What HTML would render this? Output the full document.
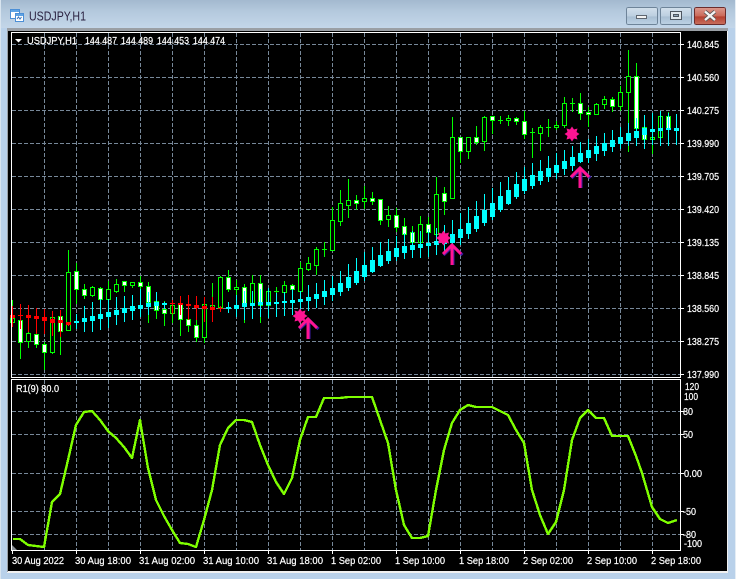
<!DOCTYPE html>
<html><head><meta charset="utf-8"><title>USDJPY,H1</title>
<style>
html,body{margin:0;padding:0;width:738px;height:579px;overflow:hidden;background:#b9d1ea}
svg{display:block}
text{font-family:"Liberation Sans",sans-serif;fill:#fff;stroke:#fff;stroke-width:.22px;font-size:10.5px}
.c{shape-rendering:crispEdges;fill:none}
</style></head><body>
<svg width="738" height="579" viewBox="0 0 738 579" xmlns="http://www.w3.org/2000/svg">
<defs>
<linearGradient id="tb" x1="0" y1="0" x2="0" y2="1"><stop offset="0" stop-color="#a3b9cf"/><stop offset=".4" stop-color="#b4c9dd"/><stop offset="1" stop-color="#c3d6e9"/></linearGradient>
<linearGradient id="bb" x1="0" y1="0" x2="0" y2="1"><stop offset="0" stop-color="#d3e0ec"/><stop offset=".5" stop-color="#bccfe0"/><stop offset=".55" stop-color="#a9bfd3"/><stop offset="1" stop-color="#bdd2e5"/></linearGradient>
<linearGradient id="rb" x1="0" y1="0" x2="0" y2="1"><stop offset="0" stop-color="#dc9a8e"/><stop offset=".5" stop-color="#cb6a5a"/><stop offset=".55" stop-color="#b54030"/><stop offset="1" stop-color="#c9705e"/></linearGradient>
<polygon id="st" fill="#ff1493" points="0,-7.5 2,-4.5 5.5,-5.5 4.5,-2 7.5,0 4.5,2 5.5,5.5 2,4.5 0,7.5 -2,4.5 -5.5,5.5 -4.5,2 -7.5,0 -4.5,-2 -5.5,-5.5 -2,-4.5"/>
<g id="ar" fill="none"><path d="M1 2V21M-8.5 11L1 2L10.5 11" stroke="#3b1aa0" stroke-width="3"/><path d="M0 2V21M-9 10L0 1L9 10" stroke="#ff1493" stroke-width="3"/></g>
</defs>
<rect width="738" height="579" fill="#b9d1ea"/>
<rect x="0" y="0" width="738" height="28" fill="url(#tb)"/>
<rect x="0" y="0" width="1" height="579" fill="#d8e4ef"/>
<rect x="735" y="0" width="1" height="579" fill="#e4edf5"/>
<rect x="736" y="0" width="2" height="579" fill="#fff"/>
<rect x="7" y="28" width="721" height="545" fill="#f0f0f0"/>
<rect x="7" y="28" width="721" height="3" fill="#9a9fa5"/>
<rect x="7" y="28" width="1" height="544" fill="#9a9fa5"/>
<rect x="8" y="31" width="719" height="540" fill="#000"/>

<!-- title icon -->
<g class="c">
<rect x="10.5" y="9.5" width="9" height="9" fill="#fff" stroke="#4c8fd6"/>
<rect x="11" y="10" width="8" height="2" fill="#5ea3e4"/>
<rect x="15.5" y="13.5" width="8" height="8" fill="#fff" stroke="#4c8fd6"/>
<rect x="16" y="14" width="7" height="2" fill="#5ea3e4"/>
</g>
<path d="M17 19l1.5-2 1.5 2 1.5-2" fill="none" stroke="#3a74b8"/>
<text x="29" y="20.5" textLength="57" lengthAdjust="spacingAndGlyphs" style="font-size:12.5px;fill:#2a2140;stroke:none">USDJPY,H1</text>

<!-- window buttons -->
<g class="c">
<rect x="626.5" y="7.5" width="31" height="17" rx="2" fill="url(#bb)" stroke="#6e8499"/>
<rect x="660.5" y="7.5" width="31" height="17" rx="2" fill="url(#bb)" stroke="#6e8499"/>
<rect x="694.5" y="7.5" width="31" height="17" rx="2" fill="url(#rb)" stroke="#6b2c2c"/>
<rect x="636.5" y="15.5" width="10" height="3" fill="#f2f2f2" stroke="#5e6670"/>
<rect x="670.5" y="11.5" width="11" height="8" fill="#dfe6ec" stroke="#4e5660"/>
<rect x="673.5" y="14.5" width="5" height="2" fill="#8fa3b6" stroke="#4e5660"/>
</g>
<path d="M705 11.5L715 20M715 11.5L705 20" stroke="#555" stroke-width="4" fill="none"/>
<path d="M705 11.5L715 20M715 11.5L705 20" stroke="#f4f4f4" stroke-width="2.4" fill="none"/>

<!-- grid -->
<path class="c" stroke="#778899" stroke-dasharray="4 2" d="M12 44.5H680M12 77.5H680M12 110.5H680M12 143.5H680M12 176.5H680M12 209.5H680M12 242.5H680M12 275.5H680M12 308.5H680M12 341.5H680M12 374.5H680M12 411.5H680M12 434.5H680M12 473.5H680M12 511.5H680M12 534.5H680"/>
<path class="c" stroke="#778899" stroke-dasharray="4 2" d="M44.5 33V377M76.5 33V377M108.5 33V377M140.5 33V377M172.5 33V377M204.5 33V377M236.5 33V377M268.5 33V377M300.5 33V377M332.5 33V377M364.5 33V377M396.5 33V377M428.5 33V377M460.5 33V377M492.5 33V377M524.5 33V377M556.5 33V377M588.5 33V377M620.5 33V377M652.5 33V377"/>
<path class="c" stroke="#778899" stroke-dasharray="4 2" d="M44.5 380V550M76.5 380V550M108.5 380V550M140.5 380V550M172.5 380V550M204.5 380V550M236.5 380V550M268.5 380V550M300.5 380V550M332.5 380V550M364.5 380V550M396.5 380V550M428.5 380V550M460.5 380V550M492.5 380V550M524.5 380V550M556.5 380V550M588.5 380V550M620.5 380V550M652.5 380V550"/>

<!-- green wicks -->
<path class="c" stroke="#00ff00" d="M12.5 300V326M20.5 315V359M28.5 330V348M36.5 331V348M44.5 342V370M52.5 317V354M60.5 312V355M68.5 250V330M76.5 263V304M84.5 284V299M92.5 286V297M100.5 287V302M108.5 281V302M116.5 279V293M124.5 281V292M132.5 282V288M140.5 276V297M148.5 282V323M156.5 301V319M164.5 301V326M172.5 301V323M180.5 304V336M188.5 319V332M196.5 320V342M204.5 304V343M212.5 283V311M220.5 276V309M228.5 270V292M236.5 280V310M244.5 284V323M252.5 275V305M260.5 275V323M268.5 288V306M276.5 287V293M284.5 281V293M292.5 284V290M300.5 262V292M308.5 257V271M316.5 247V275M324.5 242V257M332.5 207V250M340.5 190V226M348.5 179V218M356.5 195V210M364.5 186V209M372.5 192V205M380.5 199V225M388.5 206V227M396.5 208V232M404.5 218V240M412.5 226V245M420.5 216V243M428.5 217V235M436.5 177V238M444.5 187V215M452.5 117V198M460.5 137V163M468.5 137V159M476.5 126V145M484.5 116V151M492.5 116V134M500.5 116V124M508.5 115V126M516.5 117V125M524.5 111V139M532.5 128V158M540.5 125V151M548.5 119V137M556.5 121V130M564.5 97V128M572.5 98V112M580.5 93V120M588.5 107V127M596.5 103V115M604.5 96V109M612.5 97V112M620.5 86V111M628.5 50V152M636.5 63V128M644.5 118V149M652.5 120V154M660.5 112V137M668.5 112V130"/>
<!-- doji bars -->
<path class="c" stroke="#00ff00" d="M498 120.5H503M530 132.5H535M546 127.5H551M570 103.5H575M322 249.5H327M274 291.5H279"/>
<!-- hollow bodies -->
<path class="c" style="fill:#000" stroke="#00ff00" d="M10.5 318.5h4v4h-4zM26.5 333.5h4v8h-4zM50.5 317.5h4v35h-4zM66.5 272.5h4v58h-4zM90.5 287.5h4v8h-4zM106.5 289.5h4v10h-4zM114.5 284.5h4v7h-4zM130.5 282.5h4v3h-4zM170.5 305.5h4v8h-4zM202.5 304.5h4v33h-4zM210.5 305.5h4v4h-4zM218.5 277.5h4v30h-4zM234.5 287.5h4v2h-4zM250.5 283.5h4v22h-4zM266.5 291.5h4v14h-4zM282.5 285.5h4v7h-4zM298.5 268.5h4v23h-4zM306.5 263.5h4v6h-4zM314.5 249.5h4v16h-4zM330.5 220.5h4v30h-4zM338.5 203.5h4v18h-4zM346.5 200.5h4v5h-4zM362.5 198.5h4v3h-4zM386.5 215.5h4v4h-4zM418.5 224.5h4v18h-4zM434.5 194.5h4v40h-4zM450.5 137.5h4v61h-4zM466.5 137.5h4v14h-4zM482.5 117.5h4v24h-4zM506.5 118.5h4v2h-4zM538.5 127.5h4v6h-4zM554.5 125.5h4v2h-4zM562.5 103.5h4v22h-4zM594.5 104.5h4v10h-4zM602.5 99.5h4v5h-4zM618.5 92.5h4v14h-4zM626.5 76.5h4v16h-4zM650.5 137.5h4v2h-4zM658.5 116.5h4v21h-4z"/>
<!-- white bodies -->
<path class="c" style="fill:#fff" stroke="#00ff00" d="M18.5 320.5h4v22h-4zM34.5 334.5h4v10h-4zM42.5 344.5h4v8h-4zM58.5 316.5h4v15h-4zM74.5 271.5h4v18h-4zM82.5 289.5h4v6h-4zM98.5 288.5h4v11h-4zM122.5 281.5h4v4h-4zM138.5 282.5h4v4h-4zM146.5 286.5h4v16h-4zM154.5 301.5h4v9h-4zM162.5 309.5h4v4h-4zM178.5 304.5h4v15h-4zM186.5 319.5h4v6h-4zM194.5 325.5h4v12h-4zM226.5 277.5h4v12h-4zM242.5 287.5h4v18h-4zM258.5 283.5h4v22h-4zM290.5 285.5h4v4h-4zM354.5 200.5h4v3h-4zM370.5 198.5h4v3h-4zM378.5 199.5h4v21h-4zM394.5 215.5h4v12h-4zM402.5 226.5h4v8h-4zM410.5 232.5h4v10h-4zM426.5 224.5h4v8h-4zM442.5 193.5h4v8h-4zM458.5 137.5h4v14h-4zM474.5 137.5h4v5h-4zM490.5 116.5h4v4h-4zM514.5 118.5h4v3h-4zM522.5 121.5h4v13h-4zM578.5 103.5h4v10h-4zM586.5 112.5h4v2h-4zM610.5 99.5h4v7h-4zM634.5 76.5h4v52h-4zM642.5 127.5h4v12h-4zM666.5 116.5h4v13h-4z"/>

<!-- red -->
<path class="c" stroke="#ff0000" d="M12.5 306V327M20.5 304V329M28.5 305V332M36.5 308V334M44.5 309V334M52.5 311V336M60.5 310V337M68.5 322V326M172.5 300V314M180.5 296V315M188.5 295V320M196.5 296V320M204.5 297V322M212.5 297V322M220.5 306V312"/>
<g class="c" shape-rendering="crispEdges" style="fill:#ff0000"><rect x="10" y="315" width="5" height="3"/><rect x="18" y="315" width="5" height="1"/><rect x="26" y="315" width="5" height="3"/><rect x="34" y="316" width="5" height="3"/><rect x="42" y="317" width="5" height="4"/><rect x="50" y="319" width="5" height="4"/><rect x="58" y="320" width="5" height="3"/><rect x="66" y="322" width="5" height="3"/><rect x="170" y="303" width="5" height="1"/><rect x="178" y="303" width="5" height="2"/><rect x="186" y="304" width="5" height="2"/><rect x="194" y="305" width="5" height="3"/><rect x="202" y="306" width="5" height="3"/><rect x="210" y="307" width="5" height="3"/><rect x="218" y="308" width="5" height="1"/></g>

<!-- cyan wicks -->
<path class="c" stroke="#00ffff" d="M76.5 314V329M84.5 306V332M92.5 302V332M100.5 299V330M108.5 299V328M116.5 297V325M124.5 296V322M132.5 295V320M140.5 289V317M148.5 292V315M156.5 292V310M164.5 302V309M228.5 302V313M236.5 295V317M244.5 291V320M252.5 291V319M260.5 289V317M268.5 288V318M276.5 293V317M284.5 292V316M292.5 289V315M300.5 291V313M308.5 285V311M316.5 283V308M324.5 280V305M332.5 276V301M340.5 271V296M348.5 264V291M356.5 258V285M364.5 252V281M372.5 247V273M380.5 242V267M388.5 239V264M396.5 236V261M404.5 233V259M412.5 231V258M420.5 231V258M428.5 229V257M436.5 228V255M444.5 225V252M452.5 220V248M460.5 213V245M468.5 207V239M476.5 201V232M484.5 194V226M492.5 188V220M500.5 182V212M508.5 177V205M516.5 172V199M524.5 167V194M532.5 163V189M540.5 160V185M548.5 156V182M556.5 153V179M564.5 150V175M572.5 146V171M580.5 142V163M588.5 139V163M596.5 136V161M604.5 133V156M612.5 130V152M620.5 127V149M628.5 123V146M636.5 118V146M644.5 115V149M652.5 113V145M660.5 111V146M668.5 113V146M676.5 114V145"/>
<!-- cyan bodies -->
<path class="c" style="fill:#00ffff" d="M74 321h5v2h-5zM82 318h5v4h-5zM90 316h5v5h-5zM98 314h5v5h-5zM106 312h5v5h-5zM114 310h5v5h-5zM122 308h5v5h-5zM130 306h5v5h-5zM138 305h5v4h-5zM146 303h5v4h-5zM154 302h5v4h-5zM162 303h5v2h-5zM226 307h5v2h-5zM234 305h5v4h-5zM242 303h5v4h-5zM250 303h5v3h-5zM258 302h5v3h-5zM266 302h5v3h-5zM274 302h5v2h-5zM282 301h5v2h-5zM290 300h5v3h-5zM298 299h5v3h-5zM306 297h5v4h-5zM314 294h5v5h-5zM322 291h5v6h-5zM330 288h5v7h-5zM338 283h5v9h-5zM346 277h5v11h-5zM354 271h5v12h-5zM362 265h5v12h-5zM370 260h5v12h-5zM378 255h5v11h-5zM386 251h5v10h-5zM394 248h5v9h-5zM402 246h5v7h-5zM410 245h5v5h-5zM418 244h5v4h-5zM426 243h5v3h-5zM434 241h5v4h-5zM442 240h5v4h-5zM450 234h5v9h-5zM458 229h5v9h-5zM466 223h5v11h-5zM474 216h5v13h-5zM482 210h5v13h-5zM490 203h5v14h-5zM498 196h5v14h-5zM506 190h5v14h-5zM514 184h5v13h-5zM522 179h5v12h-5zM530 175h5v11h-5zM538 171h5v10h-5zM546 168h5v9h-5zM554 165h5v8h-5zM562 161h5v8h-5zM570 157h5v9h-5zM578 153h5v9h-5zM586 150h5v8h-5zM594 146h5v8h-5zM602 143h5v8h-5zM610 140h5v7h-5zM618 137h5v7h-5zM626 133h5v8h-5zM634 131h5v7h-5zM642 128h5v7h-5zM650 129h5v3h-5zM658 128h5v3h-5zM666 128h5v2h-5zM674 128h5v3h-5z"/>

<!-- stars and arrows -->
<use href="#st" x="300" y="316"/>
<use href="#st" x="443.5" y="238"/>
<use href="#st" x="572" y="134"/>
<use href="#ar" x="308" y="318"/>
<use href="#ar" x="452" y="244"/>
<use href="#ar" x="580" y="167"/>

<!-- indicator line -->
<path fill="none" stroke="#7fff00" stroke-width="2.4" stroke-linejoin="round" shape-rendering="crispEdges" d="M13 539L20 539L28 545L36 546L44 547L52 502L60 494L68 460L76 425L84 412L92 411L100 420L108 431L116 438L124 447L132 458L140 420L148 468L156 500L164 516L172 530L180 543L188 544L196 547L204 520L212 490L220 445L228 428L236 420L244 420L252 422L260 445L268 465L276 482L284 494L292 478L300 440L308 417L316 417L324 398L332 398L340 398L348 397L356 397L364 397L372 397L380 420L388 443L396 490L404 525L412 538L420 538L428 536L436 490L444 450L452 423L460 410L468 405L476 407L484 407L492 407L500 411L508 415L516 430L524 443L532 490L540 515L548 534L556 522L564 490L572 440L580 418L588 410L596 418L604 418L612 436L620 436L628 436L636 456L642 473L652 507L660 519L668 523L677 520"/>

<!-- scroll marker -->
<polygon points="12,545 17,550 12,550" fill="#8a8f96"/>

<!-- frames and ticks -->
<path class="c" stroke="#fff" d="M11.5 32.5H680.5V377.5H11.5ZM11.5 379.5H680.5V550.5H11.5Z"/>
<path class="c" stroke="#fff" d="M12.5 551V554M76.5 551V554M140.5 551V554M204.5 551V554M268.5 551V554M332.5 551V554M396.5 551V554M460.5 551V554M524.5 551V554M588.5 551V554M652.5 551V554M681 44.5H684M681 77.5H684M681 110.5H684M681 143.5H684M681 176.5H684M681 209.5H684M681 242.5H684M681 275.5H684M681 308.5H684M681 341.5H684M681 374.5H684M681 411.5H684M681 434.5H684M681 473.5H684M681 511.5H684M681 534.5H684"/>

<!-- header -->
<polygon points="15,39 22,39 18.5,42.5" fill="#fff"/>
<text x="27" y="44" textLength="50" lengthAdjust="spacingAndGlyphs">USDJPY,H1</text>
<text x="85" y="44" textLength="32" lengthAdjust="spacingAndGlyphs">144.487</text>
<text x="121" y="44" textLength="32" lengthAdjust="spacingAndGlyphs">144.489</text>
<text x="157" y="44" textLength="32" lengthAdjust="spacingAndGlyphs">144.453</text>
<text x="193" y="44" textLength="32" lengthAdjust="spacingAndGlyphs">144.474</text>
<text x="16" y="392" textLength="43" lengthAdjust="spacingAndGlyphs">R1(9) 80.0</text>

<!-- price labels -->
<text x="687" y="48" textLength="32" lengthAdjust="spacingAndGlyphs">140.845</text>
<text x="687" y="81" textLength="32" lengthAdjust="spacingAndGlyphs">140.560</text>
<text x="687" y="114" textLength="32" lengthAdjust="spacingAndGlyphs">140.275</text>
<text x="687" y="147" textLength="32" lengthAdjust="spacingAndGlyphs">139.990</text>
<text x="687" y="180" textLength="32" lengthAdjust="spacingAndGlyphs">139.705</text>
<text x="687" y="213" textLength="32" lengthAdjust="spacingAndGlyphs">139.420</text>
<text x="687" y="246" textLength="32" lengthAdjust="spacingAndGlyphs">139.135</text>
<text x="687" y="279" textLength="32" lengthAdjust="spacingAndGlyphs">138.845</text>
<text x="687" y="312" textLength="32" lengthAdjust="spacingAndGlyphs">138.560</text>
<text x="687" y="345" textLength="32" lengthAdjust="spacingAndGlyphs">138.275</text>
<text x="687" y="378" textLength="32" lengthAdjust="spacingAndGlyphs">137.990</text>

<!-- indicator labels -->
<text x="685" y="390" textLength="14" lengthAdjust="spacingAndGlyphs">120</text>
<text x="684" y="400" textLength="14" lengthAdjust="spacingAndGlyphs">100</text>
<text x="683" y="415" textLength="10" lengthAdjust="spacingAndGlyphs">80</text>
<text x="683" y="438" textLength="10" lengthAdjust="spacingAndGlyphs">50</text>
<text x="684" y="477" textLength="18" lengthAdjust="spacingAndGlyphs">0.00</text>
<text x="683" y="515" textLength="13" lengthAdjust="spacingAndGlyphs">-50</text>
<text x="683" y="538" textLength="13" lengthAdjust="spacingAndGlyphs">-80</text>
<text x="684" y="547" textLength="18" lengthAdjust="spacingAndGlyphs">-100</text>

<!-- time labels -->
<text x="12" y="564" textLength="52" lengthAdjust="spacingAndGlyphs">30 Aug 2022</text>
<text x="75" y="564" textLength="56" lengthAdjust="spacingAndGlyphs">30 Aug 18:00</text>
<text x="139" y="564" textLength="56" lengthAdjust="spacingAndGlyphs">31 Aug 02:00</text>
<text x="203" y="564" textLength="56" lengthAdjust="spacingAndGlyphs">31 Aug 10:00</text>
<text x="267" y="564" textLength="56" lengthAdjust="spacingAndGlyphs">31 Aug 18:00</text>
<text x="331" y="564" textLength="50" lengthAdjust="spacingAndGlyphs">1 Sep 02:00</text>
<text x="395" y="564" textLength="50" lengthAdjust="spacingAndGlyphs">1 Sep 10:00</text>
<text x="459" y="564" textLength="50" lengthAdjust="spacingAndGlyphs">1 Sep 18:00</text>
<text x="523" y="564" textLength="50" lengthAdjust="spacingAndGlyphs">2 Sep 02:00</text>
<text x="587" y="564" textLength="50" lengthAdjust="spacingAndGlyphs">2 Sep 10:00</text>
<text x="651" y="564" textLength="50" lengthAdjust="spacingAndGlyphs">2 Sep 18:00</text>
</svg>
</body></html>
